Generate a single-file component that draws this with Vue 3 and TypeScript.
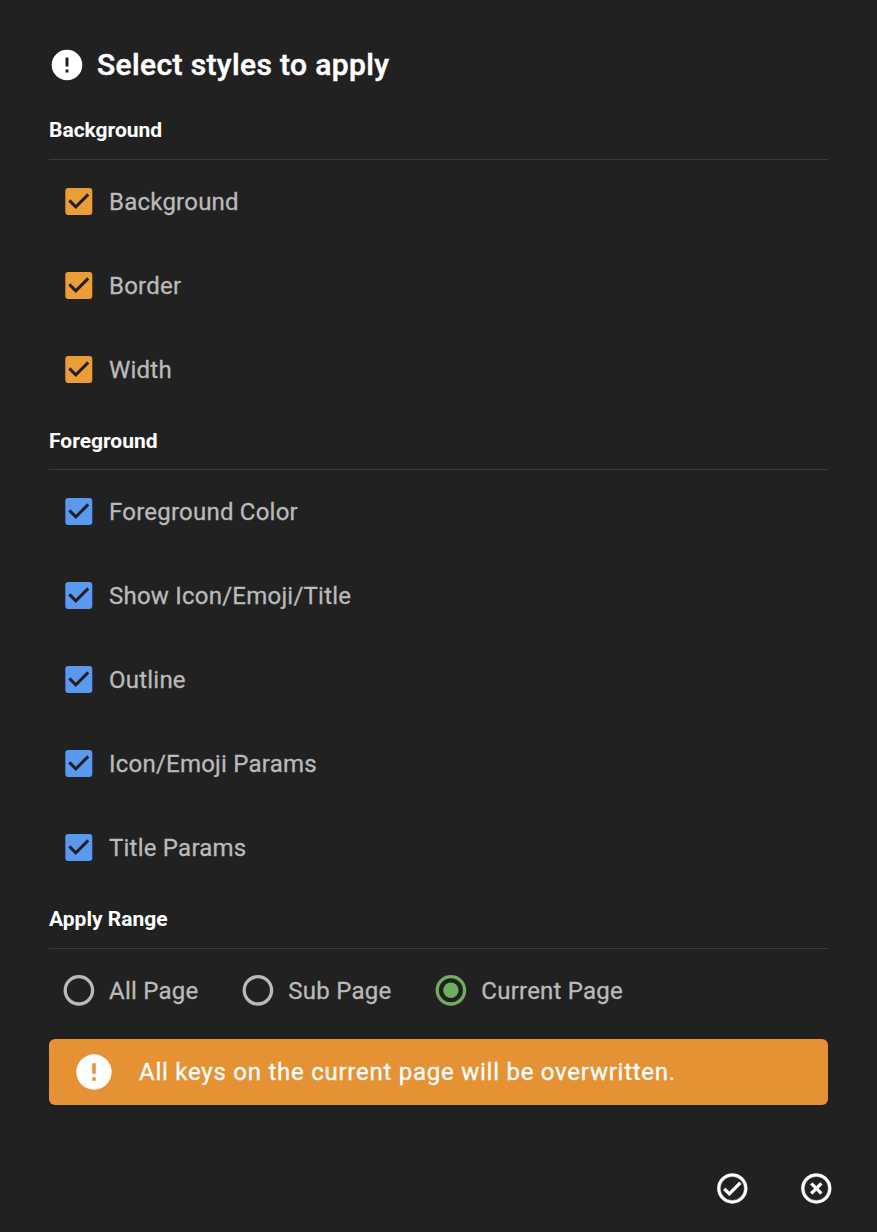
<script setup lang="ts">
import { ref } from 'vue'

interface StyleOption {
  label: string
  checked: boolean
}

interface StyleGroup {
  title: string
  tone: 'orange' | 'blue'
  options: StyleOption[]
}

const groups = ref<StyleGroup[]>([
  {
    title: 'Background',
    tone: 'orange',
    options: [
      { label: 'Background', checked: true },
      { label: 'Border', checked: true },
      { label: 'Width', checked: true },
    ],
  },
  {
    title: 'Foreground',
    tone: 'blue',
    options: [
      { label: 'Foreground Color', checked: true },
      { label: 'Show Icon/Emoji/Title', checked: true },
      { label: 'Outline', checked: true },
      { label: 'Icon/Emoji Params', checked: true },
      { label: 'Title Params', checked: true },
    ],
  },
])

const ranges = ['All Page', 'Sub Page', 'Current Page']
const selectedRange = ref('Current Page')
</script>

<template>
  <main class="dialog">
    <header class="header">
      <svg class="header-icon" viewBox="0 0 24 24">
        <path d="M13 13h-2V7h2m0 10h-2v-2h2M12 1.8a10.2 10.2 0 1 0 0 20.4a10.2 10.2 0 0 0 0-20.4Z" />
      </svg>
      <h1 class="title">Select styles to apply</h1>
    </header>

    <section v-for="group in groups" :key="group.title" class="group">
      <h2 class="heading">{{ group.title }}</h2>
      <ul class="options" :class="group.tone">
        <li v-for="option in group.options" :key="option.label" class="option" @click="option.checked = !option.checked">
          <svg class="checkbox" viewBox="2.8 3 18.667 18">
            <path
              v-if="option.checked"
              d="M10 17l-5-5l1.41-1.42L10 14.17l7.59-7.59L19 8m0-5H5a2 2 0 0 0-2 2v14a2 2 0 0 0 2 2h14a2 2 0 0 0 2-2V5a2 2 0 0 0-2-2Z"
            />
            <path v-else d="M19 3H5a2 2 0 0 0-2 2v14a2 2 0 0 0 2 2h14a2 2 0 0 0 2-2V5a2 2 0 0 0-2-2m0 2v14H5V5Z" />
          </svg>
          <span class="label">{{ option.label }}</span>
        </li>
      </ul>
    </section>

    <section class="group">
      <h2 class="heading">Apply Range</h2>
      <div class="ranges">
        <div
          v-for="range in ranges"
          :key="range"
          class="range"
          :class="{ selected: range === selectedRange }"
          @click="selectedRange = range"
        >
          <svg class="radio" viewBox="0 0 36 36">
            <circle class="ring" cx="17.9" cy="18.3" r="13.7" />
            <circle v-if="range === selectedRange" class="dot" cx="17.9" cy="18.3" r="7.7" />
          </svg>
          <span class="label">{{ range }}</span>
        </div>
      </div>
    </section>

    <div class="alert">
      <svg class="alert-icon" viewBox="0 0 24 24">
        <path d="M13 13h-2V7h2m0 10h-2v-2h2M12 1.9a10.1 10.1 0 1 0 0 20.2a10.1 10.1 0 0 0 0-20.2Z" />
      </svg>
      <span>All keys on the current page will be overwritten.</span>
    </div>

    <footer class="actions">
      <button class="action" aria-label="Apply">
        <svg viewBox="-0.2 -0.3 24 24">
          <path
            d="M12 2a10 10 0 1 0 0 20a10 10 0 0 0 0-20m0 18a8 8 0 1 1 0-16a8 8 0 0 1 0 16m4.59-12.42L10 14.17l-2.59-2.58L6 13l4 4l8-8Z"
          />
        </svg>
      </button>
      <button class="action" aria-label="Cancel">
        <svg viewBox="-0.2 -0.3 24 24">
          <path
            d="M12 20a8 8 0 1 1 0-16a8 8 0 0 1 0 16m0-18a10 10 0 1 0 0 20a10 10 0 0 0 0-20m2.59 6L12 10.59L9.41 8L8 9.41L10.59 12L8 14.59L9.41 16L12 13.41L14.59 16L16 14.59L13.41 12L16 9.41Z"
          />
        </svg>
      </button>
    </footer>
  </main>
</template>

<style>
body {
  background: #212121;
}
</style>

<style scoped>
.dialog {
  box-sizing: border-box;
  width: 877px;
  height: 1232px;
  padding: 41px 49px 0;
  background: #212121;
  color: #fff;
  font-family: Roboto, 'Liberation Sans', sans-serif;
  overflow: hidden;
}

svg {
  display: block;
  flex: none;
  fill: currentColor;
}

.header {
  display: flex;
  align-items: center;
  gap: 12px;
  height: 48px;
  margin-bottom: 25.9px;
}

.header-icon {
  width: 36px;
  height: 36px;
}

.title {
  margin: 0;
  font-size: 30px;
  font-weight: 500;
  line-height: 48px;
  letter-spacing: 0.0125em;
  -webkit-text-stroke: 0.5px currentColor;
}

.heading {
  box-sizing: border-box;
  height: 45px;
  margin: 0;
  padding-top: 0.2px;
  border-bottom: 1px solid #3b3b3b;
  font-size: 21px;
  font-weight: 700;
  line-height: 30px;
}

.options {
  margin: 0;
  padding: 0 0 13.5px;
  list-style: none;
}

.option {
  box-sizing: border-box;
  display: flex;
  align-items: center;
  gap: 16px;
  height: 84px;
  padding: 0 0 1px 16px;
}

.orange {
  color: #eb9d38;
}

.blue {
  color: #5b98f0;
}

.checkbox {
  width: 28px;
  height: 27px;
}

.label {
  padding-top: 0.6px;
  color: #bababa;
  font-size: 24px;
  line-height: 36px;
  letter-spacing: 0.009375em;
  -webkit-text-stroke: 0.3px currentColor;
}

.ranges {
  box-sizing: border-box;
  display: flex;
  gap: 42px;
  height: 84px;
  padding: 0 0 2px 12px;
}

.range {
  display: flex;
  align-items: center;
  gap: 12px;
}

.range .label {
  padding-top: 2px;
}

.radio {
  width: 36px;
  height: 36px;
  color: #bababa;
}

.selected .radio {
  color: #6fae5f;
}

.ring {
  fill: none;
  stroke: currentColor;
  stroke-width: 3.3;
}

.alert {
  display: flex;
  align-items: center;
  gap: 24px;
  height: 66px;
  margin-top: 6px;
  padding-left: 24px;
  box-sizing: border-box;
  border-radius: 6px;
  background: #e59235;
  font-size: 24px;
  letter-spacing: 0.03125em;
  -webkit-text-stroke: 0.3px currentColor;
}

.alert-icon {
  width: 42px;
  height: 42px;
}

.actions {
  display: flex;
  justify-content: flex-end;
  gap: 48px;
  margin: 65px -6px 0 0;
}

.action {
  padding: 0;
  border: 0;
  background: none;
  color: #fff;
}

.action svg {
  width: 36px;
  height: 36px;
  stroke: currentColor;
  stroke-width: 0.25px;
}
</style>
